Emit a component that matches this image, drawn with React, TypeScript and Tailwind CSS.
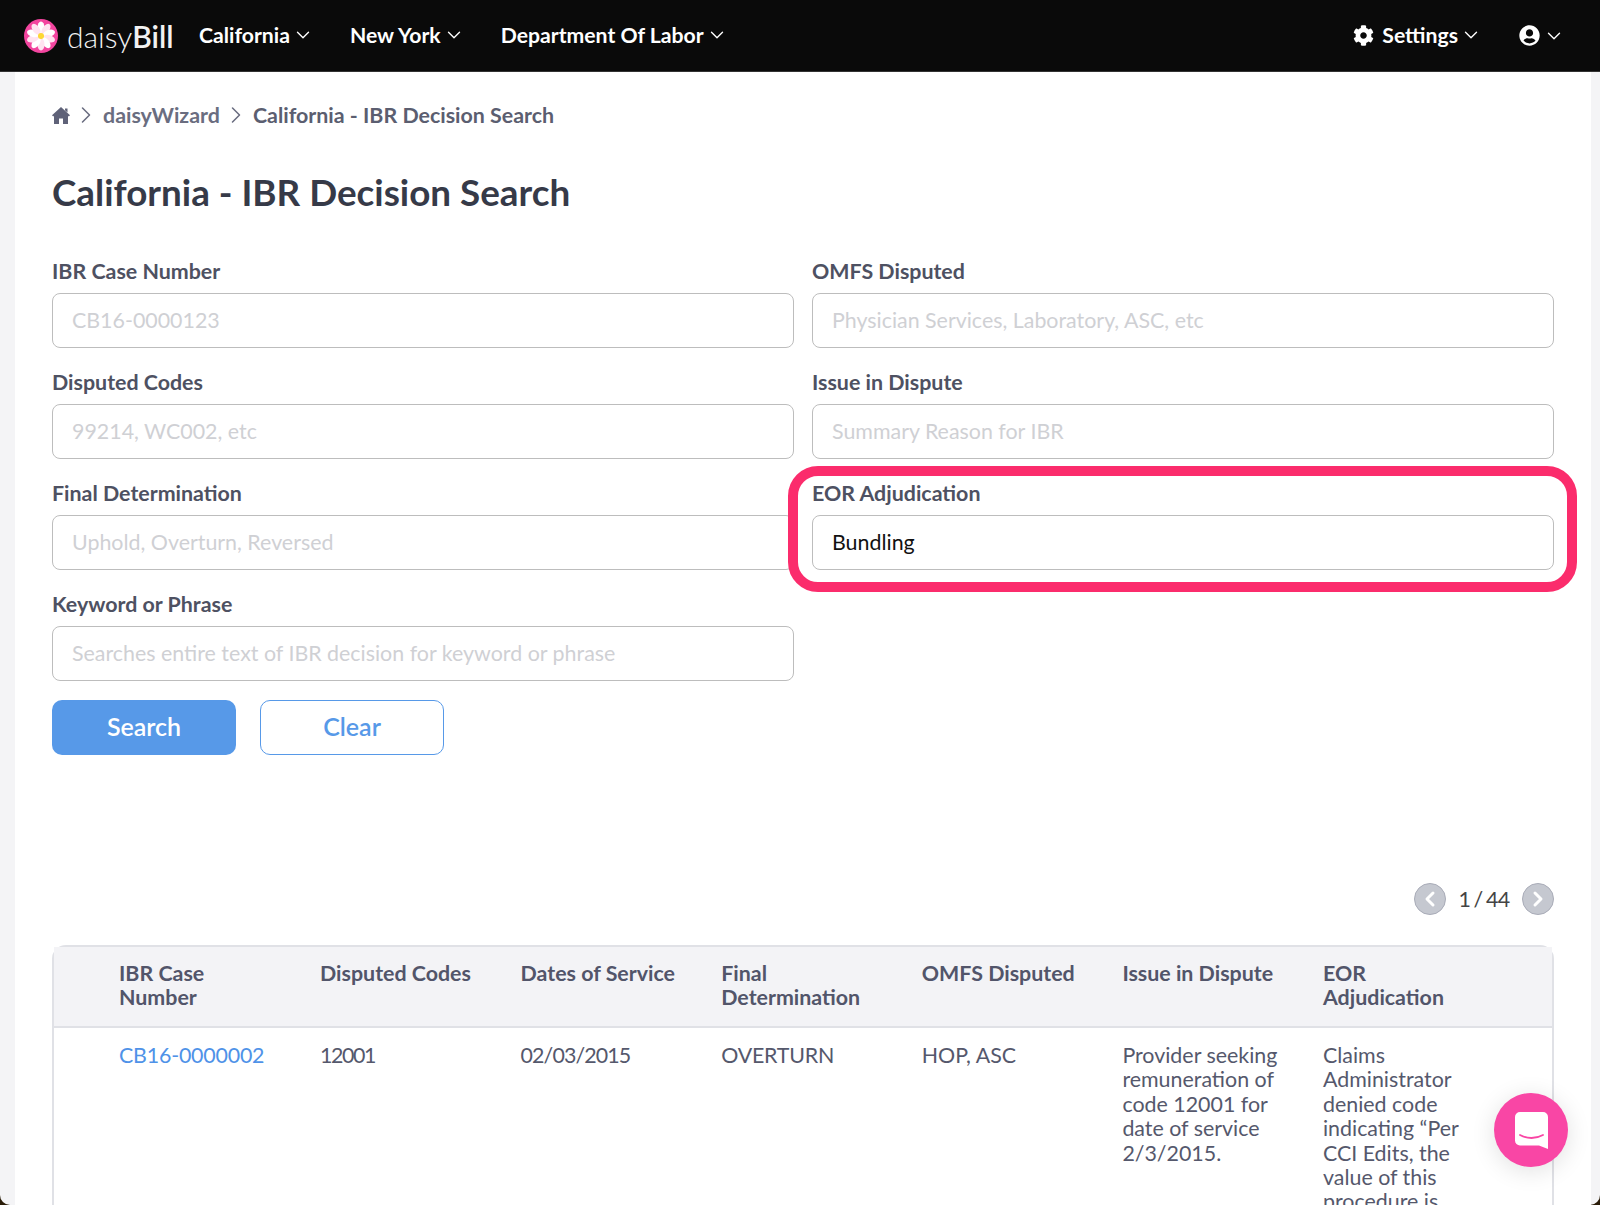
import React from "react";
import { ChevronDown, ChevronRight, ChevronLeft } from "lucide-react";
import { FaCog, FaUserCircle } from "react-icons/fa";

const font = { fontFamily: '"Lato", "Liberation Sans", sans-serif' };

function Flower() {
  const petals = [0, 36, 72, 108, 144, 180, 216, 252, 288, 324];
  return (
    <svg width="34" height="34" viewBox="0 0 34 34" className="shrink-0">
      <circle cx="17" cy="17" r="17" fill="#f3459f" />
      {petals.map((a, i) => (
        <ellipse key={a} cx="17" cy="8.6" rx="3.5" ry="6.2" fill={i % 2 ? "#ffe3f0" : "#ffffff"} transform={`rotate(${a} 17 17)`} />
      ))}
      <circle cx="17" cy="17" r="3" fill="#fdd835" />
    </svg>
  );
}

function HomeIcon() {
  return (
    <svg width="18" height="17" viewBox="0 0 18 17" className="shrink-0">
      <path d="M9 0 18 8.2 16.8 9.5 16 8.8V17H11V11.5H7V17H2V8.8L1.2 9.5 0 8.2 9 0Z M13 1.5H15.5V5.5L13 3.3Z" fill="#5f6278" />
    </svg>
  );
}

function NavItem({ label, className }: { label: string; className?: string }) {
  return (
    <div className={`flex items-center gap-[2px] text-[21.2px] font-bold text-white ${className ?? ""}`}>
      <span>{label}</span>
      <ChevronDown size={22} strokeWidth={1.5} />
    </div>
  );
}

function Field({ label, placeholder, value }: { label: string; placeholder?: string; value?: string }) {
  return (
    <div className="flex flex-col">
      <label className="mb-[11px] text-[21.4px] leading-[22px] font-bold text-[#4e5162]">{label}</label>
      <input
        readOnly
        value={value}
        placeholder={placeholder}
        className="h-[55px] w-full rounded-[8px] border border-[#bdbdbd] bg-white px-[19px] pb-[1px] text-[21.4px] text-[#111111] outline-none placeholder:text-[#cfd0d4]"
      />
    </div>
  );
}

const cols = ["IBR Case Number", "Disputed Codes", "Dates of Service", "Final Determination", "OMFS Disputed", "Issue in Dispute", "EOR Adjudication"];

export default function App() {
  return (
    <div style={font} className="relative h-[1205px] w-[1600px] overflow-hidden bg-[#2a1c08]">
      <div className="flex h-[1205px] flex-col overflow-hidden rounded-b-[10px] bg-[#f4f4f6]">
        <header className="flex h-[72px] shrink-0 items-center border-b border-[#333333] bg-[#0a0a0a] pl-[24px] pr-[35px]">
          <Flower />
          <div className="ml-[9px] w-[132px] text-[30px] leading-none font-light text-[#f2f2f2]">
            daisy<span className="font-semibold">Bill</span>
          </div>
          <NavItem label="California" />
          <NavItem label="New York" className="ml-[36px]" />
          <NavItem label="Department Of Labor" className="ml-[36px]" />
          <div className="flex-1" />
          <div className="flex items-center gap-[8px] text-white">
            <FaCog size={21} />
            <NavItem label="Settings" />
          </div>
          <div className="ml-[37px] flex items-center gap-[3px] text-white">
            <FaUserCircle size={21} />
            <ChevronDown size={22} strokeWidth={1.5} />
          </div>
        </header>

        <main className="ml-[15px] mr-[9px] flex-1 bg-white pl-[37px] pt-[31px]">
          <nav className="flex h-[24px] items-center text-[21.4px] font-bold text-[#6a6d80]">
            <HomeIcon />
            <ChevronRight size={28} strokeWidth={1.3} className="ml-[2px] mr-[3px] text-[#6a6d80]" />
            <span>daisyWizard</span>
            <ChevronRight size={28} strokeWidth={1.3} className="ml-[2px] mr-[3px] text-[#6a6d80]" />
            <span className="text-[#5b5e70]">California - IBR Decision Search</span>
          </nav>
          <h1 className="mb-[47px] mt-[44px] text-[36.8px] leading-[42px] font-bold text-[#363a48]">California - IBR Decision Search</h1>

          <div className="relative grid w-[1502px] grid-cols-2 gap-x-[18px] gap-y-[23px]">
            <Field label="IBR Case Number" placeholder="CB16-0000123" />
            <Field label="OMFS Disputed" placeholder="Physician Services, Laboratory, ASC, etc" />
            <Field label="Disputed Codes" placeholder="99214, WC002, etc" />
            <Field label="Issue in Dispute" placeholder="Summary Reason for IBR" />
            <Field label="Final Determination" placeholder="Uphold, Overturn, Reversed" />
            <Field label="EOR Adjudication" value="Bundling" />
            <Field label="Keyword or Phrase" placeholder="Searches entire text of IBR decision for keyword or phrase" />
            <div className="pointer-events-none absolute left-[736px] top-[206px] h-[126px] w-[789px] rounded-[30px] border-[10px] border-[#fb2c6c]" />
          </div>

          <div className="mt-[19px] flex gap-[24px]">
            <button className="h-[55px] w-[184px] rounded-[10px] bg-[#5799e8] pb-[1px] text-[25px] font-semibold text-white">Search</button>
            <button className="h-[55px] w-[184px] rounded-[10px] border border-[#5799e8] bg-white pb-[1px] text-[25px] font-semibold text-[#5799e8]">Clear</button>
          </div>

          <div className="mt-[128px] flex h-[32px] w-[1502px] items-center justify-end text-[21.4px] text-[#444444]">
            <span className="flex h-[32px] w-[32px] items-center justify-center rounded-full border border-[#a9acb8] bg-[#c5c8d0] text-white">
              <ChevronLeft size={24} strokeWidth={3} />
            </span>
            <span className="w-[76px] text-center tracking-[-0.6px] [word-spacing:-1.5px]">1 / 44</span>
            <span className="flex h-[32px] w-[32px] items-center justify-center rounded-full border border-[#a9acb8] bg-[#c5c8d0] text-white">
              <ChevronRight size={24} strokeWidth={3} />
            </span>
          </div>

          <div className="mt-[30px] w-[1502px] rounded-t-[14px] border-2 border-b-0 border-[#e0e1e6]">
            <table className="w-full table-fixed border-collapse text-left text-[21.4px] leading-[24.4px]">
              <colgroup>
                <col className="w-[266px]" />
                <col className="w-[200.6px]" />
                <col className="w-[200.6px]" />
                <col className="w-[200.6px]" />
                <col className="w-[200.6px]" />
                <col className="w-[200.6px]" />
                <col />
              </colgroup>
              <thead>
                <tr className="border-b-2 border-[#e0e1e6] bg-[#f3f3f6]">
                  {cols.map((c, i) => (
                    <th key={c} className={`h-[80px] align-top pb-[15px] pt-[14px] font-bold text-[#52556a] ${i === 0 ? "pl-[65px] pr-[70px]" : i === 3 ? "pr-[40px]" : i === 6 ? "pr-[75px]" : "pr-[8px]"}`}>
                      {c}
                    </th>
                  ))}
                </tr>
              </thead>
              <tbody className="text-[#55586c]">
                <tr>
                  <td className="pl-[65px] pt-[15px] align-top tracking-[-0.2px] text-[#4f92e8]">CB16-0000002</td>
                  <td className="pt-[15px] align-top tracking-[-1.4px]">12001</td>
                  <td className="pt-[15px] align-top tracking-[-0.9px]">02/03/2015</td>
                  <td className="pt-[15px] align-top tracking-[-0.2px]">OVERTURN</td>
                  <td className="pt-[15px] align-top">HOP, ASC</td>
                  <td className="pr-[20px] pt-[15px] align-top">Provider seeking remuneration of code 12001 for date of service 2/3/2015.</td>
                  <td className="pr-[75px] pt-[15px] align-top">Claims Administrator denied code indicating “Per CCI Edits, the value of this procedure is</td>
                </tr>
              </tbody>
            </table>
          </div>
        </main>
      </div>

      <div className="absolute left-[1494px] top-[1093px] flex h-[74px] w-[74px] items-center justify-center rounded-full bg-[#f946a5] shadow-[0_4px_24px_rgba(0,0,0,0.12)]">
        <svg width="33" height="37" viewBox="0 0 33 37">
          <path d="M5 0H28a5 5 0 0 1 5 5V37L24 33.5H5a5 5 0 0 1-5-5V5a5 5 0 0 1 5-5Z" fill="#ffffff" />
          <path d="M5 23c7 4 16 4 23 0" fill="none" stroke="#f946a5" strokeWidth="1.8" strokeLinecap="round" />
        </svg>
      </div>
    </div>
  );
}
